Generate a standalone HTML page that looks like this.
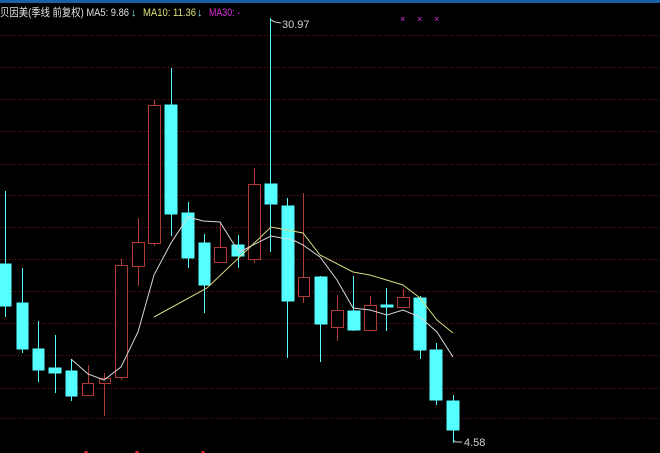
<!DOCTYPE html><html><head><meta charset="utf-8"><style>
html,body{margin:0;padding:0;background:#000;width:660px;height:453px;overflow:hidden}
svg{display:block}
</style></head><body>
<svg width="660" height="453" viewBox="0 0 660 453" xmlns="http://www.w3.org/2000/svg">
<rect width="660" height="453" fill="#000"/>
<rect x="0" y="0" width="660" height="3" fill="#1a5fa8"/>
<g stroke="#6a1a1a" stroke-width="1" stroke-dasharray="1,2">
<line x1="0" y1="35.5" x2="660" y2="35.5"/><line x1="0" y1="67.5" x2="660" y2="67.5"/><line x1="0" y1="99.5" x2="660" y2="99.5"/><line x1="0" y1="131.5" x2="660" y2="131.5"/><line x1="0" y1="164.5" x2="660" y2="164.5"/><line x1="0" y1="195.5" x2="660" y2="195.5"/><line x1="0" y1="227.5" x2="660" y2="227.5"/><line x1="0" y1="259.5" x2="660" y2="259.5"/><line x1="0" y1="291.5" x2="660" y2="291.5"/><line x1="0" y1="323.5" x2="660" y2="323.5"/><line x1="0" y1="355.5" x2="660" y2="355.5"/><line x1="0" y1="388.5" x2="660" y2="388.5"/><line x1="0" y1="418.5" x2="660" y2="418.5"/>
</g>
<g font-family="Liberation Sans, Noto Sans CJK SC, sans-serif" font-size="11">
<text x="0" y="16" fill="#e0e0e0" textLength="129" lengthAdjust="spacingAndGlyphs">贝因美(季线 前复权) MA5: 9.86</text>
<text x="131" y="16" fill="#7fe8f0">↓</text>
<text x="143" y="16" fill="#e0e07a" textLength="53" lengthAdjust="spacingAndGlyphs">MA10: 11.36</text>
<text x="197" y="16" fill="#7fe8f0">↓</text>
<text x="209" y="16" fill="#e030e0" textLength="31" lengthAdjust="spacingAndGlyphs">MA30: -</text>
<text x="282" y="28" fill="#d0d0d0">30.97</text>
<text x="464" y="446" fill="#d0d0d0">4.58</text>
</g>
<path d="M271 20 L275 22 L281 23" stroke="#ccc" fill="none"/>
<path d="M453 440 L456 442 L462 442" stroke="#ccc" fill="none"/>
<g fill="#e030e0" font-size="9" font-family="Liberation Sans, sans-serif"><text x="400" y="22">×</text><text x="417" y="22">×</text><text x="434" y="22">×</text></g>
<g fill="#e02020"><circle cx="86" cy="453" r="2"/><circle cx="137" cy="453" r="2"/><circle cx="203" cy="453" r="2"/></g>
<g stroke="#5ff" fill="#5ff">
<line x1="5.5" y1="191" x2="5.5" y2="317"/><rect x="0" y="264" width="11" height="42"/>
<line x1="22.5" y1="268" x2="22.5" y2="353"/><rect x="17" y="303" width="11" height="46"/>
<line x1="38.5" y1="321" x2="38.5" y2="382"/><rect x="33" y="349" width="11" height="21"/>
<line x1="55.5" y1="335" x2="55.5" y2="393"/><rect x="49" y="368" width="12" height="5"/>
<line x1="71.5" y1="359" x2="71.5" y2="401"/><rect x="66" y="371" width="11" height="25"/>
<line x1="171.5" y1="68" x2="171.5" y2="236"/><rect x="165" y="105" width="12" height="109"/>
<line x1="188.5" y1="202" x2="188.5" y2="268"/><rect x="182" y="213" width="12" height="45"/>
<line x1="204.5" y1="234" x2="204.5" y2="313"/><rect x="199" y="243" width="11" height="42"/>
<line x1="238.5" y1="235" x2="238.5" y2="268"/><rect x="232" y="245" width="12" height="11"/>
<line x1="270.5" y1="18" x2="270.5" y2="252"/><rect x="265" y="184" width="12" height="20"/>
<line x1="287.5" y1="198" x2="287.5" y2="358"/><rect x="282" y="206" width="12" height="95"/>
<line x1="320.5" y1="276" x2="320.5" y2="362"/><rect x="315" y="277" width="12" height="47"/>
<line x1="353.5" y1="276" x2="353.5" y2="331"/><rect x="348" y="311" width="12" height="19"/>
<line x1="386.5" y1="288" x2="386.5" y2="331"/><rect x="381" y="305" width="12" height="2"/>
<line x1="420.5" y1="296" x2="420.5" y2="359"/><rect x="414" y="298" width="12" height="52"/>
<line x1="436.5" y1="343" x2="436.5" y2="405"/><rect x="430" y="350" width="12" height="50"/>
<line x1="453.5" y1="395" x2="453.5" y2="443"/><rect x="447" y="401" width="12" height="29"/>
</g>
<g stroke="#b03a36" fill="#000">
<line x1="88.5" y1="365" x2="88.5" y2="383"/><rect x="82.5" y="383.5" width="11" height="12"/>
<line x1="104.5" y1="373" x2="104.5" y2="416"/><rect x="99.5" y="378.5" width="11" height="5"/>
<line x1="121.5" y1="259" x2="121.5" y2="380"/><rect x="115.5" y="265.5" width="12" height="112"/>
<line x1="138.5" y1="218" x2="138.5" y2="286"/><rect x="132.5" y="242.5" width="12" height="24"/>
<line x1="154.5" y1="100" x2="154.5" y2="246"/><rect x="148.5" y="105.5" width="12" height="138"/>
<line x1="220.5" y1="222" x2="220.5" y2="247"/><rect x="214.5" y="247.5" width="12" height="15"/>
<line x1="254.5" y1="168" x2="254.5" y2="263"/><rect x="248.5" y="184.5" width="12" height="75"/>
<line x1="303.5" y1="193" x2="303.5" y2="303"/><rect x="298.5" y="277.5" width="11" height="19"/>
<line x1="337.5" y1="295" x2="337.5" y2="341"/><rect x="331.5" y="310.5" width="12" height="17"/>
<line x1="370.5" y1="296" x2="370.5" y2="305"/><rect x="364.5" y="305.5" width="12" height="25"/>
<line x1="403.5" y1="289" x2="403.5" y2="297"/><rect x="397.5" y="297.5" width="12" height="10"/>
</g>
<polyline fill="none" stroke="#d8d8d8" stroke-width="1" points="71,359 88,374 104,380 121,367 138,332 154,275 171,243 188,217 203,221 220,222 233,243 240,252 253,245 271,236 293,240 303,245 320,257 337,280 353,308 370,310 387,315 403,310 420,317 437,332 453,357"/>
<polyline fill="none" stroke="#d8d880" stroke-width="1" points="154,317 207,288 247,250 271,227 303,233 320,255 353,272 370,275 403,285 420,298 437,320 453,333"/>
</svg>
</body></html>
